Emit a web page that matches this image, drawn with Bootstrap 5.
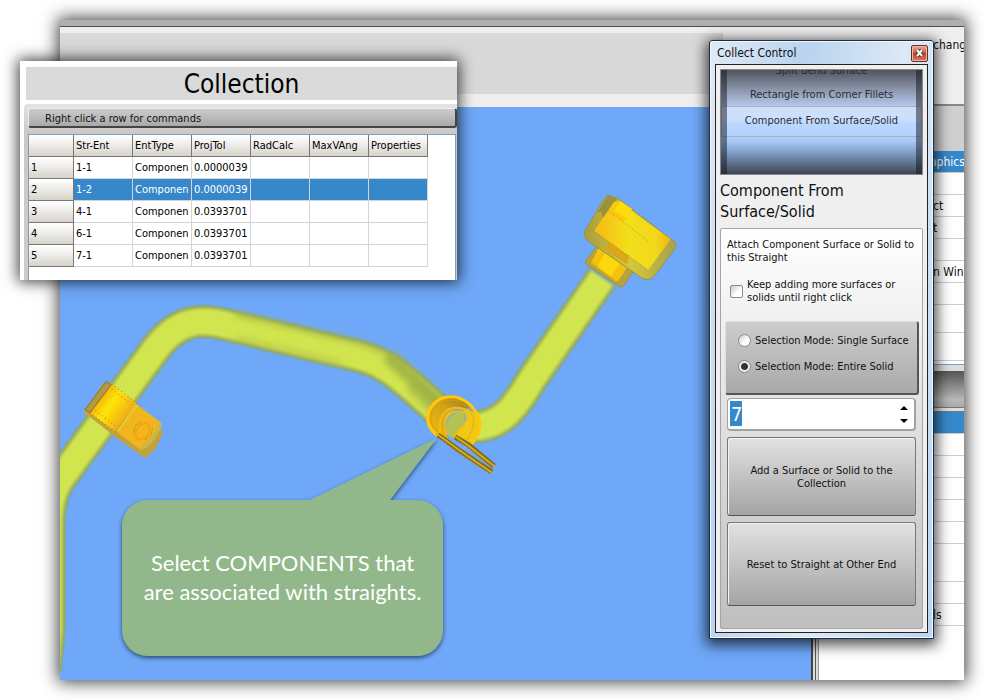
<!DOCTYPE html>
<html lang="en">
<head>
<meta charset="utf-8">
<meta name="viewport" content="width=device-width, initial-scale=1">
<title>Collect Control</title>
<link href="https://cdn.jsdelivr.net/npm/bootstrap@5.3.0/dist/css/bootstrap.min.css" rel="stylesheet">
<style>
body{font-family:"DejaVu Sans Condensed","DejaVu Sans",sans-serif;font-size:11px;line-height:13px;color:#111;background:#fff}
.desk{min-height:100vh;padding:20px 20px 20px 60px}
.mainwin{background:#efefef;box-shadow:0 0 16px 2px rgba(0,0,0,.75);overflow:hidden}
.strip{height:7px;background:#afafaf;border-bottom:1px solid #505050}
.ribbon{height:80px;padding:6px 88px 13px 0;background:#efefef}
.ribbon-in{background:#d9d9d9}
.scene{background:#6fa8f8;min-height:0}
.scene svg{width:100%;height:100%}
.side{width:153px;font-size:12px;overflow:hidden;white-space:nowrap}
.side-edge{border-left:2px solid #444;background:#ddd;padding-left:2px}
.side-in{border-left:1px solid #555;padding-left:2px}
.side-body{border-left:1px solid #8a9cb0;background:#fff}
.side-top{height:79px;background:#efefef;border-bottom:2px solid #888;padding:12px 0 0 122px}
.side-gap{height:45px;background:#cfcfcf}
.srow{height:22px;border-bottom:1px solid #ccc;padding:5px 0 0 114px}
.srow-on{background:#3788ca;color:#fff;padding-left:111px}
.srow-t{height:28px}.srow-x{height:38px}
.side-split{height:7px;background:#ddd;border-top:1px solid #7f9db9;margin-top:3px}
.side-hd{height:36px;background:linear-gradient(#555,#b8b8b8 80%,#aaa)}
.side-lines{height:5px;background:#ddd;border-top:1px solid #777;border-bottom:1px solid #777}
.panelwin{left:20px;top:61px;width:437px;height:219px;background:#fff;box-shadow:0 0 14px 2px rgba(0,0,0,.75);overflow:hidden}
.coltitle{margin:6px 0 0 6px;height:33px;background:#dadada;font-size:26px;line-height:35px;color:#000}
.colbody{margin:4px 0 0 4px;padding:4px 0 0 4px;background:linear-gradient(#e4e4e4,#c9c9c9 28px,#ccc);border-radius:4px 0 0 0}
.cmdbar{height:20px;padding:3px 0 0 16px;background:linear-gradient(#ccc,#a9a9a9);border:1px solid #eee;border-right:2px solid #444;border-bottom:2px solid #444;border-radius:3px}
.grid{margin:6px 1px 0 0;border:1px solid #7f9db9;border-bottom:0;background:#fff}
.grid table{table-layout:fixed;width:399px;border-collapse:separate;border-spacing:0;color:#000}
.grid th,.grid td{height:22px;padding:0 0 0 2px;border-right:1px solid #d4d4d4;border-bottom:1px solid #d4d4d4;font-weight:400;overflow:hidden;white-space:nowrap;vertical-align:middle}
.grid th{background:linear-gradient(#fff,#f0efec 40%,#d6d3ca);border-color:#777}
.grid .picked td{background:#3788ca;color:#fff}
.dlg{left:709px;top:40px;width:225px;border:1px solid #222c3c;border-radius:3px 3px 0 0;background:linear-gradient(100deg,#dfeaf6,#b9d3ee 30%,#dce9f6 60%,#b9d6f3);box-shadow:0 3px 14px 3px rgba(0,0,0,.7),inset 0 0 0 1px #eef6ff;padding:0 5px 5px}
.dlgbar{height:23px;padding:1px 0 0 2px;font-size:12px}
.xbtn{width:17px;height:17px;border:1px solid #6e2b22;border-radius:2px;background:linear-gradient(#e6a595,#d2604a 45%,#bb3a22 50%,#d98068);box-shadow:inset 0 0 0 1px #eeb9aa}
.dlgin{border:1px solid #222;background:#efefef;padding:4px 4px 3px 4px}
.wheel{height:106px;border:1px solid #888;background:linear-gradient(#50555f,#838c9f 16%,#b3c6ea 34%,#c4dcff 50%,#a8cbfa 68%,#7f9bc2 80%,#3c4654);color:#2c2c30;overflow:hidden}
.wheel .edge{top:0;bottom:0;width:6px;background:rgba(20,22,30,.5)}
.witem{height:24px;line-height:26px;margin:0}
.witem-cut{margin-top:-12px}
.wsel{height:31px;line-height:27px;border:1px solid #aab2c0;background:linear-gradient(rgba(225,238,255,.6),rgba(212,230,255,.5) 45%,rgba(180,212,255,.5) 55%)}
.headl{font-size:16px;line-height:21px;margin:5px 0 6px}
.box{border:1px solid #a5a5a5;border-radius:2px;background:linear-gradient(#fff,#bfbfbf);height:401px;padding:9px 3px 0 4px}
.note{margin:0 0 14px 2px}
.keep{margin-left:5px}
.tick{appearance:none;width:13px;height:13px;border:1px solid #888;border-radius:2px;background:linear-gradient(135deg,#ccc,#fff 60%);margin:0}
.dot{border-radius:50%}
.dot:checked{background:radial-gradient(circle,#333 0 3px,#eee 4px)}
.modes{height:74px;margin-top:17px;border:1px solid #ddd;border-right:2px solid #555;border-bottom:2px solid #555;border-radius:3px;background:linear-gradient(#cdcdcd,#a9a9a9);padding:12px 0 0 12px}
.modes div{height:26px}
.spin{height:33px;margin:3px 3px 0 2px;border:2px solid #a2a2a2;border-width:1px 2px 2px 1px;border-radius:4px;background:#fff;padding:2px}
.spin input{border:0;outline:0;padding:0 0 0 1px;width:100%;min-width:0;font-size:20px;color:#fff;background:linear-gradient(#3788ca,#3788ca) 0 0/12px 25px no-repeat}
.spin button{border:0;background:none;padding:0;width:16px;height:13px;display:flex;align-items:center;justify-content:center}
.bigbtn{margin:6px 3px 0 2px;border:1px solid #777;border-bottom-color:#555;border-radius:3px;background:linear-gradient(#e2e2e2,#a4a4a4);box-shadow:inset 1px 1px 0 #f4f4f4;height:79px;color:#111;padding:0 14px}
.bigbtn-b{height:84px}
.callout{left:122px;top:438px;width:321px;height:218px;padding-top:110px;color:#fff;font-family:Lato,sans-serif;font-size:22px;line-height:29px;white-space:nowrap}
.callout svg{left:0;top:0;overflow:visible}
.callout p{position:relative}
</style>
<script src="https://cdn.jsdelivr.net/npm/bootstrap@5.3.0/dist/js/bootstrap.bundle.min.js"></script>
</head>
<body>
<div class="desk d-flex position-relative">
  <main class="mainwin flex-grow-1 d-flex flex-column">
    <div class="strip flex-shrink-0"></div>
    <div class="d-flex flex-grow-1">
      <section class="flex-grow-1 d-flex flex-column">
        <div class="ribbon"><div class="ribbon-in h-100"></div></div>
        <div class="scene flex-grow-1 position-relative">
          <svg class="position-absolute top-0 start-0" viewBox="60 107 751 573" preserveAspectRatio="xMinYMin slice" aria-label="Bent tube with components">
            <defs>
              <filter id="soft" x="-5%" y="-5%" width="110%" height="110%"><feGaussianBlur stdDeviation="1"/></filter>
              <filter id="soft3" x="-30%" y="-30%" width="160%" height="160%"><feGaussianBlur stdDeviation="3"/></filter>
              <path id="t1" d="M45 670L49 630V525Q49 492 64 474L157 347Q180 318 210 322C225 323 250 331 345 353C388 361 400 377 446 418"/>
              <path id="t2" d="M472 427C505 427 519 400 532 379L602 278"/>
              <linearGradient id="ring" x1="0" x2="1" y1="0" y2="0"><stop offset="0" stop-color="#f8ae0c"/><stop offset=".4" stop-color="#fde608"/><stop offset=".62" stop-color="#fbd20a"/><stop offset="1" stop-color="#f0ae1c"/></linearGradient>
              <linearGradient id="cup" x1="0" x2="1"><stop offset="0" stop-color="#f7b814"/><stop offset=".45" stop-color="#f1e01a"/><stop offset=".8" stop-color="#f2d81a"/><stop offset="1" stop-color="#f3b515"/></linearGradient>
              <linearGradient id="shell" x1="0" x2="1"><stop offset="0" stop-color="#a89c3e"/><stop offset=".5" stop-color="#d5c83a"/><stop offset="1" stop-color="#a8a04c"/></linearGradient>
              <linearGradient id="hook" x1="0" x2="1" y1="1" y2="0"><stop offset="0" stop-color="#f0bd10"/><stop offset=".55" stop-color="#d2a31b"/><stop offset="1" stop-color="#8d7a2b"/></linearGradient>
            </defs>
            <g fill="none" stroke-linejoin="round">
              <use href="#t1" stroke="#7ea599" stroke-width="34"/>
              <use href="#t2" stroke="#7ea599" stroke-width="34"/>
              <g filter="url(#soft)">
                <use href="#t1" stroke="#a9bb50" stroke-width="30"/><use href="#t1" stroke="#d1e54f" stroke-width="25"/>
                <use href="#t2" stroke="#a9bb50" stroke-width="30"/><use href="#t2" stroke="#d1e54f" stroke-width="25"/>
              </g>
              <g filter="url(#soft3)" stroke="#9faf45">
                <path d="M235 314L352 341Q385 349 407 368L440 402" stroke-width="5" opacity=".7"/>
                <path d="M235 338L342 364" stroke-width="4" opacity=".6"/>
                <path d="M388 356L412 378L446 410" stroke-width="15" opacity=".8"/>
                <path d="M412 382L442 412" stroke-width="20" opacity=".5"/>
              </g>
            </g>
            <!-- band clamp with mounting tab -->
            <path d="M102 384L109 387L145 414L163 432Q157 451 145 458L118 439L90 417L83 413L86 409L99 390Z" fill="#c2a33b"/>
            <g transform="translate(124 416) rotate(37)">
              <path d="M-31-18H2V18H-31Z" fill="url(#ring)"/>
              <path d="M1-17H34Q38 0 34 17H4Z" fill="#f1b51d"/>
              <path d="M34-15Q39 0 34 15" fill="none" stroke="#cdb64a" stroke-width="4"/>
              <path d="M4-17V16" stroke="#e5cd22" stroke-width="2"/>
              <ellipse cx="24" cy="1" rx="6" ry="9" fill="none" stroke="#f7a40d" stroke-width="2"/>
              <path d="M17-6L15 1L18 8M30-8L33-1L31 7" fill="none" stroke="#d09a25"/>
              <path d="M-29-18H11M-30 18H4M-26-14H2M-26 13H2" stroke="#aa7b13" stroke-dasharray="1 3"/>
              <path d="M-35-17H-29V18H-35Z" fill="#b29a41" stroke="#98752a"/>
            </g>
            <!-- open hook clamp around the second bend -->
            <path d="M446 434Q443 414 464 411Q468 421 455 434L457 441Z" fill="#b2c254"/>
            <path d="M438 436Q424 426 428 412Q434 396 452 395Q462 397 470 408L462 409Q450 408 445 417Q441 427 448 438Z" fill="url(#hook)"/>
            <path d="M463 408Q481 412 480 428Q478 438 470 446L454 436Q467 424 466 416Z" fill="#eec916"/>
            <g fill="none" stroke-linecap="round">
              <path d="M438 436Q424 426 429 411Q437 395 455 397Q473 401 480 421Q481 434 470 446" stroke="#ffc90a" stroke-width="3"/>
              <path d="M438 432Q426 422 433 409Q441 399 454 400Q464 402 471 410" stroke="#dc9c0c"/>
              <path d="M441 434Q437 419 446 411Q453 406 464 409Q472 416 462 427L454 436M446 434Q442 421 449 415Q455 410 463 412" stroke="#f7bb0c" stroke-width="2"/>
              <path d="M470 411Q479 422 467 440" stroke="#f7a40c"/>
              <path d="M438 435L459 450L492 472M455 437L469 445L494 466" stroke="#7d6a24" stroke-width="5" stroke-linecap="butt"/>
              <path d="M437 434L459 450L491 472M456 437L469 446L494 466" stroke="#dbad16" stroke-width="2"/>
              <path d="M442 440L458 453L490 474M458 440L492 468" stroke="#b38a17" stroke-dasharray="2 2"/>
            </g>
            <!-- end fitting -->
            <path d="M597 246L587 259Q584 262 588 266L618 286Q623 288 625 284L634 270Z" fill="#b5a33f" stroke="#9c9140"/>
            <path d="M599 248L591 263L617 282L629 265Z" fill="#fad80b"/>
            <path d="M599 250L591 263L597 267L606 252ZM622 260L610 278L617 282L629 265Z" fill="#f5b00f" opacity=".6"/>
            <path d="M608 195L617 198L676 243Q677 246 674 250L655 275Q650 282 642 278L588 241Q582 236 586 229L604 199Z" fill="url(#shell)" stroke="#999249"/>
            <path d="M608 195L617 199L603 218L601 211L597 213Z" fill="#8b843d" opacity=".7"/>
            <path d="M614 202L594 231L648 270L671 239L630 210Z" fill="url(#cup)"/>
            <path d="M614 202L622 202L632 209L624 222L610 213Z" fill="#fbc70c"/>
            <path d="M620 201L632 209L626 218L614 211Z" fill="#fedc08"/>
            <path d="M609 242L629 256L627 264L604 249Z" fill="#dba617"/>
            <path d="M606 209L648 241M618 198L673 241M594 231L648 270M590 261L620 284" stroke="#aa8e22" stroke-dasharray="1 2" fill="none"/>
          </svg>
        </div>
      </section>
      <aside class="side d-flex flex-column">
        <div class="side-top">chang</div>
        <div class="side-edge flex-grow-1 d-flex"><div class="side-in flex-grow-1 d-flex"><div class="side-body flex-grow-1">
        <div class="side-gap"></div>
        <div class="srow srow-on">aphics</div>
        <div class="srow"></div>
        <div class="srow">ct</div>
        <div class="srow">t</div>
        <div class="srow"></div>
        <div class="srow">n Win</div>
        <div class="srow"></div>
        <div class="srow srow-t"></div>
        <div class="srow srow-t"></div>
        <div class="side-split"></div>
        <div class="side-hd"></div>
        <div class="side-lines"></div>
        <div class="srow srow-on"></div>
        <div class="srow"></div>
        <div class="srow"></div>
        <div class="srow"></div>
        <div class="srow"></div>
        <div class="srow"></div>
        <div class="srow srow-x"></div>
        <div class="srow"></div>
        <div class="srow">ls</div>
        </div></div></div>
      </aside>
    </div>
  </main>

  <div class="callout position-absolute text-center">
    <svg class="position-absolute" width="321" height="218" aria-hidden="true">
      <defs><filter id="sh" x="-10%" y="-10%" width="120%" height="120%"><feDropShadow dx="0" dy="2" stdDeviation="2" flood-color="#123" flood-opacity=".7"/></filter></defs>
      <path d="M26 62H188L315 0L268 62H295A26 26 0 0 1 321 88V192A26 26 0 0 1 295 218H26A26 26 0 0 1 0 192V88A26 26 0 0 1 26 62Z" fill="#91b78a" filter="url(#sh)"/>
    </svg>
    <p class="m-0">Select COMPONENTS that<br>are associated with straights.</p>
  </div>

  <section class="panelwin position-absolute d-flex flex-column">
    <h1 class="coltitle text-center fw-normal flex-shrink-0">Collection</h1>
    <div class="colbody flex-grow-1 d-flex flex-column">
      <div class="cmdbar flex-shrink-0">Right click a row for commands</div>
      <div class="grid flex-grow-1">
        <table>
          <colgroup><col style="width:45px"><col><col><col><col><col><col></colgroup>
          <thead><tr><th></th><th>Str-Ent</th><th>EntType</th><th>ProjTol</th><th>RadCalc</th><th>MaxVAng</th><th>Properties</th></tr></thead>
          <tbody>
            <tr><th>1</th><td>1-1</td><td>Componen</td><td>0.0000039</td><td></td><td></td><td></td></tr>
            <tr class="picked"><th>2</th><td>1-2</td><td>Componen</td><td>0.0000039</td><td></td><td></td><td></td></tr>
            <tr><th>3</th><td>4-1</td><td>Componen</td><td>0.0393701</td><td></td><td></td><td></td></tr>
            <tr><th>4</th><td>6-1</td><td>Componen</td><td>0.0393701</td><td></td><td></td><td></td></tr>
            <tr><th>5</th><td>7-1</td><td>Componen</td><td>0.0393701</td><td></td><td></td><td></td></tr>
          </tbody>
        </table>
      </div>
    </div>
  </section>

  <section class="dlg position-absolute">
    <div class="dlgbar d-flex align-items-center justify-content-between">
      <span>Collect Control</span>
      <button class="xbtn p-0 d-flex align-items-center justify-content-center" type="button" aria-label="Close"><svg width="9" height="8" viewBox="0 0 9 8"><path d="M2 1L7 7M7 1L2 7" stroke="#444" stroke-width="4"/><path d="M2 1L7 7M7 1L2 7" stroke="#fff" stroke-width="2"/></svg></button>
    </div>
    <div class="dlgin">
      <div class="wheel position-relative text-center">
        <div class="edge position-absolute start-0"></div><div class="edge position-absolute end-0"></div>
        <div class="d-flex flex-column">
        <p class="witem witem-cut">Split Bend Surface</p>
        <p class="witem">Rectangle from Corner Fillets</p>
        <div class="wsel">Component From Surface/Solid</div>
        </div>
      </div>
      <h2 class="headl fw-normal">Component From<br>Surface/Solid</h2>
      <div class="box">
        <p class="note">Attach Component Surface or Solid to<br>this Straight</p>
        <div class="keep d-flex align-items-center gap-1"><input class="tick flex-shrink-0" type="checkbox" id="keep"><label for="keep">Keep adding more surfaces or<br>solids until right click</label></div>
        <div class="modes">
          <div class="d-flex gap-1"><input class="tick dot" type="radio" name="mode" id="m1"><label for="m1">Selection Mode: Single Surface</label></div>
          <div class="d-flex gap-1"><input class="tick dot" type="radio" name="mode" id="m2" checked><label for="m2">Selection Mode: Entire Solid</label></div>
        </div>
        <div class="spin d-flex">
          <input type="text" value="7" aria-label="Straight number">
          <div class="d-flex flex-column justify-content-center">
            <button type="button" aria-label="Increase"><svg width="8" height="4"><path d="M0 4L4 0L8 4Z"/></svg></button>
            <button type="button" aria-label="Decrease"><svg width="8" height="4"><path d="M0 0L4 4L8 0Z"/></svg></button>
          </div>
        </div>
        <div class="d-flex flex-column">
          <button class="bigbtn" type="button">Add a Surface or Solid to the Collection</button>
          <button class="bigbtn bigbtn-b" type="button">Reset to Straight at Other End</button>
        </div>
      </div>
    </div>
  </section>
</div>
</body>
</html>
